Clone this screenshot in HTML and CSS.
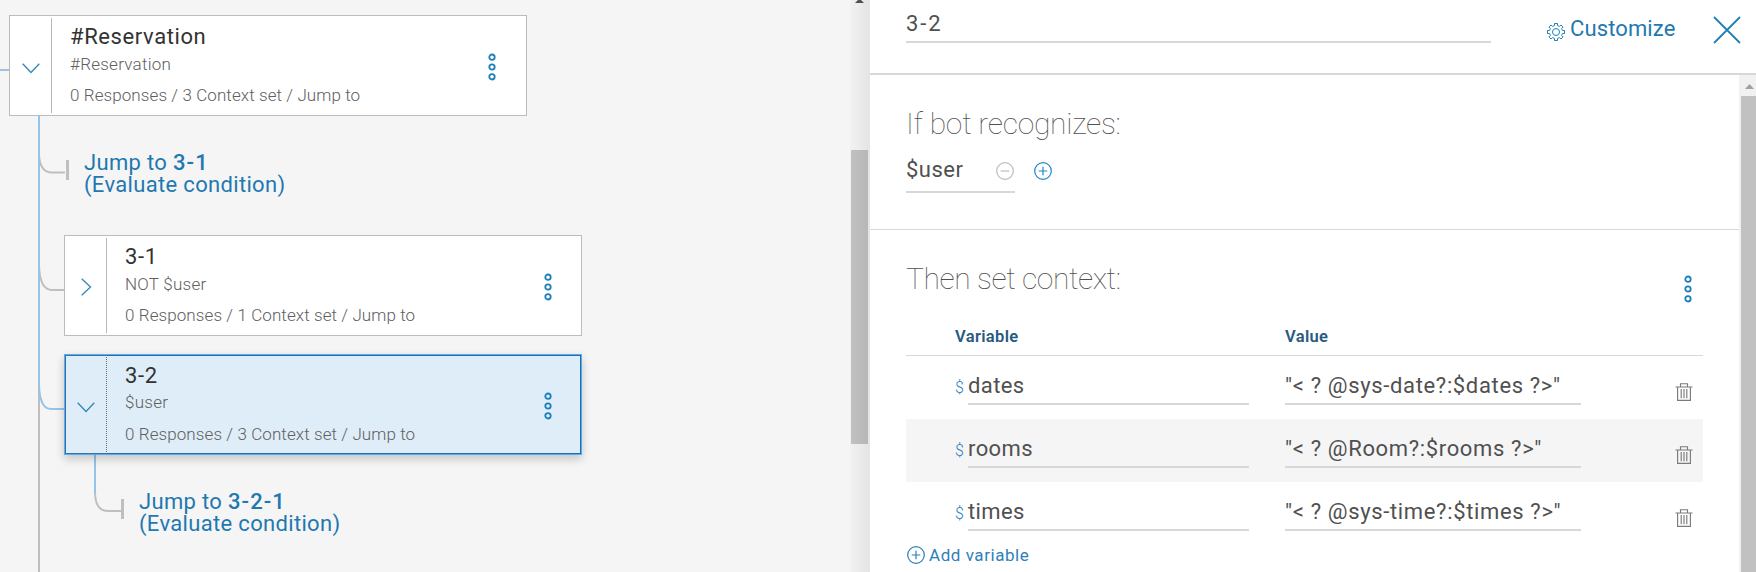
FILE: index.html
```
<!DOCTYPE html>
<html lang="en">
<head>
<meta charset="utf-8">
<title>Dialog editor</title>
<link rel="stylesheet" href="styles.css">
</head>
<body>
<svg class="defs" aria-hidden="true">
  <symbol id="dots" viewBox="0 0 8 28"><g fill="none" stroke="#1f7fb8" stroke-width="1.8"><circle cx="4" cy="4.2" r="2.7"/><circle cx="4" cy="14" r="2.7"/><circle cx="4" cy="23.8" r="2.7"/></g></symbol>
  <symbol id="down" viewBox="0 0 18 18"><path d="M.7 4.7 9 13.5l8.3-8.8" fill="none" stroke="#3287b8" stroke-width="1.3"/></symbol>
  <symbol id="right" viewBox="0 0 18 18"><path d="M4.7.7 13.5 9l-8.8 8.3" fill="none" stroke="#3287b8" stroke-width="1.3"/></symbol>
  <symbol id="plus" viewBox="0 0 18 18"><g fill="none" stroke="currentColor" stroke-width="1.2"><circle cx="9" cy="9" r="8.3"/><path d="M9 4.7v8.6M4.7 9h8.6"/></g></symbol>
  <symbol id="minus" viewBox="0 0 18 18"><g fill="none" stroke="currentColor" stroke-width="1.2"><circle cx="9" cy="9" r="8.3"/><path d="M4.7 9h8.6"/></g></symbol>
  <symbol id="trash" viewBox="0 0 18 18"><path d="M.5 4h17M5.5 3.800V.7h7v3.100M2.600 4v13.400h12.800V4M6.200 6v9.300M9 6v9.300M11.800 6v9.300" fill="none" stroke="#7b7b7b" stroke-width="1.150"/></symbol>
</svg>
<div class="app">
  <main class="tree">
    <svg class="links" width="850" height="572" fill="none" stroke-width="2">
      <g stroke="#bfbfbf">
        <path d="M39 388V572M39 155Q40 172.500 52 172.500H65M39 266Q40 290 52 290H64M95 492Q95 511 108 511H121"/>
        <path d="M67.500 160v20M122.500 499v20" stroke-width="3"/>
      </g>
      <path d="M39 116V386Q40 409 51 409H64M95 455V493" stroke="#94c4ea"/>
      <path d="M0 70H9" stroke="#a6c1dd"/>
    </svg>
    <section class="node">
      <div class="toggle"><svg><use href="#down"/></svg></div>
      <div class="info"><h3>#Reservation</h3><p class="cond">#Reservation</p><p class="meta">0 Responses / 3 Context set / Jump to</p></div>
      <svg class="dots"><use href="#dots"/></svg>
    </section>
    <p class="jump">Jump to <b>3-1</b><br>(Evaluate condition)</p>
    <section class="node child">
      <div class="toggle closed"><svg><use href="#right"/></svg></div>
      <div class="info"><h3>3-1</h3><p class="cond">NOT $user</p><p class="meta">0 Responses / 1 Context set / Jump to</p></div>
      <svg class="dots"><use href="#dots"/></svg>
    </section>
    <section class="node child selected">
      <div class="toggle"><svg><use href="#down"/></svg></div>
      <div class="info"><h3>3-2</h3><p class="cond">$user</p><p class="meta">0 Responses / 3 Context set / Jump to</p></div>
      <svg class="dots"><use href="#dots"/></svg>
    </section>
    <p class="jump nested">Jump to <b>3-2-1</b><br>(Evaluate condition)</p>
  </main>
  <div class="scroll-left"><svg width="20" height="4"><path d="M5 3 8 0h3l3 3z" fill="#505050"/></svg><div class="thumb"></div></div>
  <aside class="panel">
    <header class="head">
      <div class="name">3-2</div>
      <div class="customize">
        <svg width="18" height="18" viewBox="0 0 18 18" fill="none" stroke="#1f7fb8" stroke-linejoin="round"><circle cx="9" cy="9" r="3.500"/><path d="M7.500 2.600V.5h3v2.100L12.460 3.410l1.490-1.480 2.120 2.120-1.480 1.490.81 1.960h2.100v3h-2.100l-.81 1.960 1.480 1.490-2.120 2.120-1.490-1.480-1.960.81v2.100h-3v-2.100l-1.960-.81-1.490 1.480-2.120-2.120 1.480-1.490-.81-1.960H.5v-3h2.100l.81-1.960-1.480-1.490 2.120-2.120 1.490 1.480z"/></svg>
        <span>Customize</span>
      </div>
      <svg class="close" width="28" height="28" viewBox="0 0 28 28"><path d="m1 1 26 26M27 1 1 27" stroke="#1f7fb8" stroke-width="1.800"/></svg>
    </header>
    <div class="body">
      <div class="content">
        <section class="condition">
          <h2>If bot recognizes:</h2>
          <div class="cond-row">
            <div class="cond-field"><span>$user</span><svg class="ico muted"><use href="#minus"/></svg></div>
            <svg class="ico blue"><use href="#plus"/></svg>
          </div>
        </section>
        <section class="context">
          <div class="context-head"><h2 class="then">Then set context:</h2><svg class="dots"><use href="#dots"/></svg></div>
          <div class="row labels"><span class="c-var">Variable</span><span>Value</span></div>
          <div class="row"><i>$</i><div class="field var">dates</div><div class="field val">"&lt; ? @sys-date?:$dates ?&gt;"</div><svg class="ico trash"><use href="#trash"/></svg></div>
          <div class="row alt"><i>$</i><div class="field var">rooms</div><div class="field val">"&lt; ? @Room?:$rooms ?&gt;"</div><svg class="ico trash"><use href="#trash"/></svg></div>
          <div class="row"><i>$</i><div class="field var">times</div><div class="field val">"&lt; ? @sys-time?:$times ?&gt;"</div><svg class="ico trash"><use href="#trash"/></svg></div>
          <div class="add"><svg class="ico"><use href="#plus"/></svg><span>Add variable</span></div>
        </section>
      </div>
      <div class="scroll-right"><svg width="17" height="21"><path d="m6 14 4.500-5 4.500 5z" fill="#a0a0a0"/></svg><div class="thumb"></div></div>
    </div>
  </aside>
</div>
</body>
</html>
```

FILE: styles.css
```
* { box-sizing: border-box; margin: 0; }
body { font-family: Roboto, "Liberation Sans", sans-serif; background: #f5f5f5; overflow: hidden; }
svg { display: block; flex: none; }
.defs { position: absolute; width: 0; height: 0; }
.app { display: flex; width: 1756px; height: 572px; overflow: hidden; }

.tree { position: relative; width: 850px; padding: 15px 0 0 9px; background: #f5f5f5; }
.links { position: absolute; left: 0; top: 0; }
.node { position: relative; display: flex; align-items: stretch; width: 518px; height: 101px; background: #fff; border: 1px solid #bcbcbc; }
.toggle { display: flex; align-items: center; justify-content: center; width: 42px; margin: 2px 0; border-right: 1px solid #b8b8b8; }
.toggle svg { width: 18px; height: 18px; margin-top: 4px; }
.closed svg { margin-top: 2px; }
.info { flex: 1; padding: 7px 0 0 18px; white-space: nowrap; }
.info h3 { font-size: 22px; line-height: 28px; font-weight: 400; color: #323232; letter-spacing: .6px; }
.cond { font-size: 17px; line-height: 26px; font-weight: 300; color: #606060; letter-spacing: .25px; }
.meta { margin-top: 6px; font-size: 17px; line-height: 24px; font-weight: 300; color: #606060; letter-spacing: .09px; }
.dots { width: 8px; height: 28px; }
.node .dots { margin: 37px 30px 0 0; }
.child { margin-left: 55px; }
.node.child .dots { margin-right: 29px; }
.selected { margin-top: 18px; background: #dfedf8; border: 1px solid #5aaafa; box-shadow: inset 0 0 0 1px #1f70a8, 0 4px 9px rgba(0,0,0,.2); }
.selected .toggle { margin: 0; border: 1px dotted #5b7488; }
.selected .cond { margin-top: -1px; }
.selected .meta { margin-top: 7px; }
.jump { position: relative; height: 119px; padding: 36px 0 0 75px; color: #1f78b0; font-size: 22px; line-height: 22px; letter-spacing: .33px; white-space: nowrap; }
.jump b { font-weight: 500; letter-spacing: 1.1px; }
.nested { padding-left: 130px; }

.scroll-left { width: 20px; background: linear-gradient(90deg, #f2f2f2, #e4e4e4); }
.scroll-left .thumb { width: 17px; height: 294px; margin: 146px 0 0 1px; background: linear-gradient(90deg, #c1c1c1, #b7b7b7); }

.panel { width: 886px; background: #fff; color: #505050; }
.head { display: flex; height: 75px; border-bottom: 2px solid #d8d8d8; padding-left: 36px; }
.name { width: 585px; height: 43px; padding-top: 10px; border-bottom: 2px solid #d8d8d8; font-size: 22px; line-height: 28px; letter-spacing: 1.9px; }
.customize { display: flex; gap: 5px; margin: 15px 0 0 56px; width: 166px; color: #1f78b0; font-size: 22px; line-height: 28px; letter-spacing: .12px; }
.customize svg { margin-top: 8px; }
.close { margin-top: 16px; }
.body { display: flex; height: 497px; }
.content { width: 869px; }
.condition { height: 155px; padding: 32px 0 0 36px; border-bottom: 1px solid #d8d8d8; }
h2 { font-size: 30px; line-height: 34px; font-weight: 100; color: #505050; letter-spacing: -.25px; white-space: nowrap; }
.then { letter-spacing: -.42px; }
.cond-row { display: flex; gap: 19px; }
.cond-field { display: flex; justify-content: space-between; width: 109px; height: 52px; padding: 15px 1px 0 0; border-bottom: 2px solid #d8d8d8; font-size: 22px; line-height: 28px; letter-spacing: .5px; }
.ico { width: 18px; height: 18px; }
.muted { color: #bcbcbc; margin-top: 6px; }
.blue { color: #1f87c8; margin-top: 21px; }
.context { padding: 32px 37px 0 36px; }
.context-head { display: flex; justify-content: space-between; height: 64px; padding-right: 10px; }
.context-head .dots { margin-top: 13px; }
.row { display: flex; align-items: flex-start; width: 797px; height: 63px; padding-left: 49px; }
.row.labels { height: 30px; border-bottom: 1px solid #d8d8d8; font-size: 16.5px; line-height: 21px; font-weight: 600; color: #285a80; letter-spacing: .35px; }
.c-var { width: 330px; }
.alt { background: #f5f5f6; }
.row i { width: 13px; padding-top: 22px; font-style: normal; font-size: 16px; line-height: 20px; font-weight: 300; color: #2f83c5; }
.field { height: 49px; padding-top: 16px; border-bottom: 2px solid #d8d8d8; font-size: 22px; line-height: 28px; white-space: nowrap; }
.var { width: 281px; margin-right: 36px; letter-spacing: .4px; }
.val { width: 296px; letter-spacing: .65px; }
.trash { margin: 27px 0 0 94px; }
.add { display: flex; gap: 4px; padding-left: 1px; color: #2f7fb8; font-size: 17px; line-height: 20px; letter-spacing: .55px; }
.add svg { margin-top: 1px; }
.scroll-right { width: 17px; background: #f1f1f1; }
.scroll-right .thumb { width: 15px; height: 476px; margin-left: 2px; background: #c1c1c1; }
```
